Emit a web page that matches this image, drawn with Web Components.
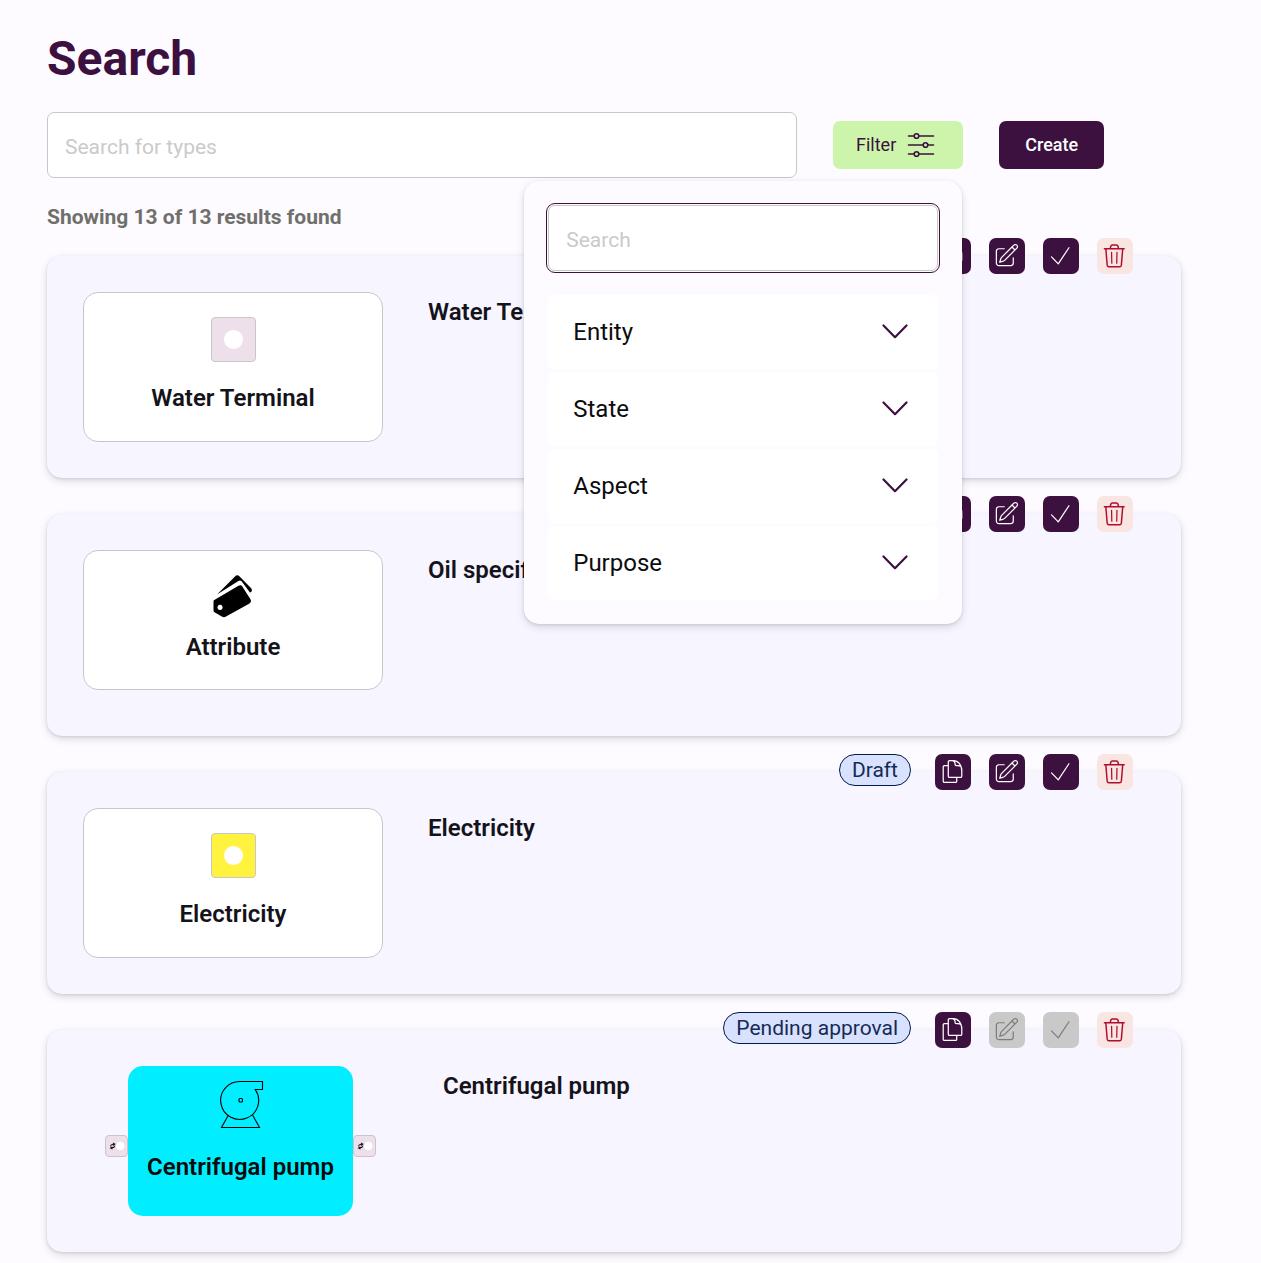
<!DOCTYPE html>
<html lang="en">
<head>
<meta charset="utf-8">
<meta name="viewport" content="width=device-width, initial-scale=1">
<title>Search</title>
<style>
:root {
  --primary: #3d113f;
  --background: #fdfbff;
  --surface: #f7f5ff;
  --on-surface: #14131a;
  --outline: #c9c6ca;
  --elevation: 0 1px 3px rgba(0, 0, 0, .1), 0 3px 8px rgba(0, 0, 0, .13);
}
body {
  margin: 0;
  background: var(--background);
  color: var(--on-surface);
  font-family: Roboto, "Liberation Sans", sans-serif;
}
</style>
</head>
<body>
<search-page></search-page>
<script>
const define = (name, html, setup) => {
  const template = document.createElement('template');
  template.innerHTML = html;
  customElements.define(name, class extends HTMLElement {
    connectedCallback() {
      if (this.shadowRoot) return;
      const root = this.attachShadow({ mode: 'open' });
      root.append(template.content.cloneNode(true));
      if (setup) setup(this, root);
    }
  });
};

const ICONS = {
  copy: '<path d="M15.75 17.25v3.375c0 .621-.504 1.125-1.125 1.125h-9.75a1.125 1.125 0 01-1.125-1.125V7.875c0-.621.504-1.125 1.125-1.125H8.25M19.125 17.25H9.375a1.125 1.125 0 01-1.125-1.125V3.375c0-.621.504-1.125 1.125-1.125h3.375c4.3 0 7.5 4 7.500 9v4.875c0 .621-.504 1.125-1.125 1.125zM20.25 11.25v-1.1a3.375 3.375 0 00-3.375-3.375h-1.5a1.125 1.125 0 01-1.125-1.125v-1.1a2.6 2.6 0 00-2.25-2.3"/>',
  edit: '<path d="M16.862 4.487l1.687-1.688a1.875 1.875 0 112.652 2.652L10.582 16.07a4.5 4.5 0 01-1.897 1.13L6 18l.8-2.685a4.5 4.5 0 011.13-1.897l8.932-8.931zM16.862 4.487L19.5 7.125M18 14v4.75A2.25 2.25 0 0115.75 21H5.25A2.25 2.25 0 013 18.75V8.25A2.25 2.25 0 015.25 6H10"/>',
  check: '<path d="M4 13.2l6 6.2 9.500-14.3"/>',
  trash: '<path stroke-width="1.3" d="M3 6h17.6M4.3 6.2l1.2 14.4q.2 1.4 1.6 1.4h9.4q1.4 0 1.6-1.4l1.2-14.4M8.2 5.8l.5-2q.3-1.1 1.4-1.1h3.6q1.1 0 1.4 1.1l.5 2"/><path stroke-width="1.1" d="M9.4 9.2l.2 9.6M14.2 9.2l-.2 9.6"/>'
};

define('icon-button', `
  <style>
    :host { display: block; }
    button {
      display: flex; align-items: center; justify-content: center;
      width: 36px; height: 36px; padding: 0; border: 0; border-radius: 7px;
      background: var(--primary); color: #fff; cursor: pointer;
    }
    :host([icon="trash"]) button { background: #f9e5e1; color: #b00c2f; }
    button:disabled { background: #c9c9c9; color: #7d7d7d; cursor: default; }
    svg { width: 28px; height: 28px; fill: none; stroke: currentColor; stroke-width: 1.1; stroke-linecap: round; stroke-linejoin: round; }
  </style>
  <button type="button"><svg viewBox="0 0 24.889 24.889" aria-hidden="true"></svg></button>`,
  (host, root) => {
    const button = root.querySelector('button');
    root.querySelector('svg').innerHTML = ICONS[host.getAttribute('icon')];
    button.setAttribute('aria-label', host.getAttribute('icon'));
    button.disabled = host.hasAttribute('off');
  });

define('state-badge', `
  <style>
    :host {
      display: block; box-sizing: border-box; height: 32px; padding: 0 12px;
      border: 1px solid #001b4a; border-radius: 16px; background: #d8e2ff;
      color: #152a55; font-size: 21px; line-height: 30px; white-space: nowrap;
    }
  </style>
  <slot></slot>`);

define('text-field', `
  <style>
    :host { display: block; }
    input {
      display: block; box-sizing: border-box; width: 100%; height: 66px; margin: 0;
      padding: 4px 18px 0 17px; border: 1px solid var(--outline); border-radius: 7px;
      background: #fff; color: var(--on-surface); font: 400 21px/24px Roboto, "Liberation Sans", sans-serif;
    }
    input::placeholder { color: #cacaca; opacity: 1; }
    :host([active]) input, input:focus { outline: 1px solid var(--primary); outline-offset: 1px; }
  </style>
  <input type="text">`,
  (host, root) => {
    const input = root.querySelector('input');
    input.placeholder = host.getAttribute('placeholder');
    input.setAttribute('aria-label', input.placeholder);
  });

define('filter-group', `
  <style>
    :host { display: block; }
    button {
      display: flex; align-items: center; justify-content: space-between;
      width: 100%; height: 74px; padding: 0 30px 0 25px; border: 0; border-radius: 6px;
      background: #fff; color: #0c0c0e; font: 400 24px/30px Roboto, "Liberation Sans", sans-serif;
      cursor: pointer;
    }
    svg { width: 26px; height: 16px; fill: none; stroke: var(--primary); stroke-width: 2.2; stroke-linecap: round; stroke-linejoin: round; }
  </style>
  <button type="button" aria-expanded="false">
    <slot></slot>
    <svg viewBox="0 0 26 16" aria-hidden="true"><path d="M1.500 1.500L13 13.200L24.500 1.500"/></svg>
  </button>`);

define('filter-menu', `
  <style>
    :host { display: block; position: relative; }
    .toggle {
      display: flex; align-items: center; gap: 11px; height: 48px; padding: 0 28px 0 23px;
      border: 0; border-radius: 7px; background: #ccf5ab; color: var(--primary);
      font: 400 18px/24px Roboto, "Liberation Sans", sans-serif; cursor: pointer;
    }
    .toggle svg { width: 28px; height: 28px; fill: #ccf5ab; stroke: var(--primary); stroke-width: 1.6; stroke-linecap: round; }
    .panel {
      position: absolute; z-index: 2; top: 60px; right: 1px; box-sizing: border-box; width: 438px;
      display: flex; flex-direction: column; gap: 24px; padding: 24px;
      border-radius: 15px; background: var(--background); box-shadow: var(--elevation);
    }
    .groups { display: flex; flex-direction: column; gap: 3px; }
  </style>
  <button class="toggle" type="button" aria-expanded="true">Filter
    <svg viewBox="0 0 28 28" aria-hidden="true">
      <path d="M1.500 5h25M1.500 14h25M1.500 23h25"/>
      <circle cx="9.500" cy="5" r="2.300"/><circle cx="18.500" cy="14" r="2.300"/><circle cx="9.500" cy="23" r="2.300"/>
    </svg>
  </button>
  <div class="panel">
    <text-field placeholder="Search" active></text-field>
    <div class="groups">
      <filter-group>Entity</filter-group>
      <filter-group>State</filter-group>
      <filter-group>Aspect</filter-group>
      <filter-group>Purpose</filter-group>
    </div>
  </div>`);

define('terminal-preview', `
  <style>
    :host {
      display: flex; flex-direction: column; align-items: center; gap: 21px;
      box-sizing: border-box; width: 300px; height: 150px; padding-top: 24px;
      border: 1px solid var(--outline); border-radius: 15px; background: #fff;
      font-size: 24px; line-height: 30px; font-weight: 600;
    }
    .swatch {
      display: flex; align-items: center; justify-content: center; box-sizing: border-box;
      width: 45px; height: 45px; border: 1px solid var(--outline); border-radius: 4px; background: var(--swatch, #eee0ea);
    }
    .swatch::before { content: ""; width: 19px; height: 19px; border-radius: 50%; background: #fff; }
  </style>
  <div class="swatch"></div>
  <slot></slot>`,
  host => host.style.setProperty('--swatch', host.getAttribute('color')));

define('attribute-preview', `
  <style>
    :host {
      display: flex; flex-direction: column; align-items: center; gap: 14px;
      box-sizing: border-box; width: 300px; height: 140px; padding-top: 24px;
      border: 1px solid var(--outline); border-radius: 15px; background: #fff;
      font-size: 24px; line-height: 30px; font-weight: 600;
    }
    svg { width: 40px; height: 43px; }
  </style>
  <svg viewBox="0 0 40 43" aria-hidden="true">
    <path d="M4 19.500L22 1.500Q24 -.7 26.600 1.400L38.200 13.200Q39.600 15 38.200 17L36.900 17.600L28.600 6.200Q27.300 4.900 25.400 5.900Z"/>
    <path fill-rule="evenodd" d="M1.300 25L25.500 10.800Q28 9.300 29.500 11.700L37.600 24.600Q38.700 27 36.500 28.400L13 41.600Q11 42.700 9.200 41.700L1.500 37.300Q.5 36.700.5 35.500V26.400Q.5 25.400 1.300 25ZM7 29.800a2.600 2.600 0 1 0 .1 0Z"/>
  </svg>
  <slot></slot>`);

define('block-port', `
  <style>
    :host {
      display: flex; align-items: center; justify-content: center; box-sizing: border-box;
      width: 23px; height: 22px; border: 1px solid var(--outline); border-radius: 4px; background: #eee0ea;
    }
    svg { width: 16px; height: 10px; }
  </style>
  <svg viewBox="0 0 16 10" aria-hidden="true">
    <path d="M1 6.200Q1.200 2.800 3.800 3L4 1.600L6.800 3L4.400 5.100L4 4.100Q2.400 4 1 6.200ZM6.300 4Q6 7.400 3.600 7.200L3.400 8.600L.6 7.200L3 5.200L3.400 6.100Q5 6 6.300 4Z" fill="#26152a"/>
    <circle cx="11.200" cy="5" r="4.200" fill="#fff"/>
  </svg>`);

define('block-preview', `
  <style>
    :host { display: flex; align-items: center; justify-content: center; width: 315px; height: 150px; }
    .block {
      display: flex; flex-direction: column; align-items: center; gap: 22px; box-sizing: border-box;
      width: 225px; height: 150px; padding-top: 14px; border-radius: 15px;
      background: #00eeff; color: #0b0b0b; font-size: 24px; line-height: 30px; font-weight: 600;
    }
    svg { width: 46px; height: 50px; fill: none; stroke: #000; stroke-width: 1.1; }
    .block svg { margin-left: 3px; }
    block-port { flex: none; margin-top: 10px; }
  </style>
  <block-port></block-port>
  <div class="block">
    <svg viewBox="0 0 46 50" aria-hidden="true">
      <path d="M22 1.500H43.500V9.500H36.200A19 19 0 1 1 22 1.500M9.300 35.200L2.500 47.500H40.500L33.700 35.200"/>
      <rect x="20" y="18.500" width="3.500" height="3.500" rx="1"/>
    </svg>
    <slot></slot>
  </div>
  <block-port></block-port>`);

define('result-card', `
  <style>
    :host {
      position: relative; display: flex; align-items: flex-start; gap: 45px;
      box-sizing: border-box; height: 222px; padding: 36px;
      border-radius: 15px; background: var(--surface); box-shadow: var(--elevation);
    }
    h2 { margin: 5px 0 0; font-size: 24px; line-height: 30px; font-weight: 600; }
    .actions { position: absolute; top: -18px; right: 48px; display: flex; align-items: flex-start; gap: 18px; }
    ::slotted(state-badge) { margin-right: 6px; }
  </style>
  <slot name="preview"></slot>
  <h2></h2>
  <div class="actions">
    <slot name="state"></slot>
    <icon-button icon="copy"></icon-button>
    <icon-button icon="edit" class="change"></icon-button>
    <icon-button icon="check" class="change"></icon-button>
    <icon-button icon="trash"></icon-button>
  </div>`,
  (host, root) => {
    root.querySelector('h2').textContent = host.getAttribute('heading');
    if (host.hasAttribute('locked')) {
      root.querySelectorAll('.change').forEach(el => {
        el.setAttribute('off', '');
        el.shadowRoot?.querySelector('button').setAttribute('disabled', '');
      });
    }
  });

define('search-page', `
  <style>
    :host { display: block; padding: 31px 80px 11px 47px; }
    h1 { margin: 0 0 25px; color: var(--primary); font-size: 48px; line-height: 56px; font-weight: 700; }
    .toolbar { display: flex; align-items: center; gap: 36px; }
    .toolbar text-field { flex: 0 1 750px; }
    .create {
      height: 48px; padding: 0 26px; border: 0; border-radius: 7px; background: var(--primary);
      color: #fff; font: 500 18px/24px Roboto, "Liberation Sans", sans-serif; cursor: pointer;
    }
    .count { margin: 27px 0; color: #6f6f6c; font-size: 21px; line-height: 24px; font-weight: 700; }
    .results { display: flex; flex-direction: column; gap: 36px; }
  </style>
  <main>
    <h1>Search</h1>
    <div class="toolbar">
      <text-field placeholder="Search for types"></text-field>
      <filter-menu></filter-menu>
      <button class="create" type="button">Create</button>
    </div>
    <p class="count">Showing 13 of 13 results found</p>
    <div class="results">
      <result-card heading="Water Terminal">
        <terminal-preview slot="preview" color="#eee0ea">Water Terminal</terminal-preview>
      </result-card>
      <result-card heading="Oil specification">
        <attribute-preview slot="preview">Attribute</attribute-preview>
      </result-card>
      <result-card heading="Electricity">
        <terminal-preview slot="preview" color="#fff33f">Electricity</terminal-preview>
        <state-badge slot="state">Draft</state-badge>
      </result-card>
      <result-card heading="Centrifugal pump" locked>
        <block-preview slot="preview">Centrifugal pump</block-preview>
        <state-badge slot="state">Pending approval</state-badge>
      </result-card>
    </div>
  </main>`);
</script>
</body>
</html>
